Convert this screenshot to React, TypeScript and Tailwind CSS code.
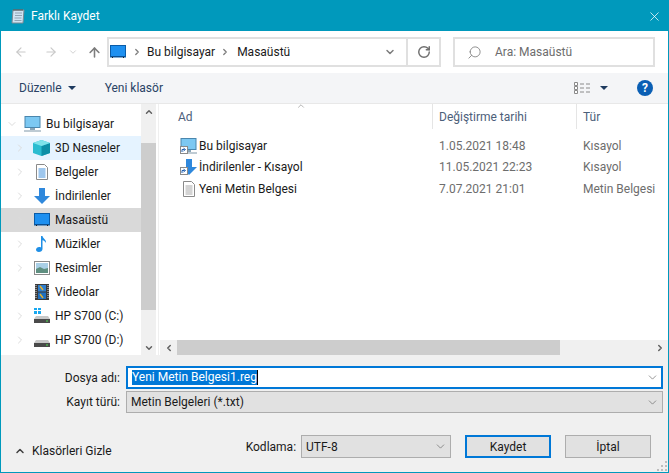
import { ArrowLeft, ArrowRight, ArrowUp, ChevronDown, ChevronRight, ChevronUp, ChevronLeft, RotateCw, Search, X } from "lucide-react";
import type { ReactNode } from "react";

function NotepadIcon() {
  return (
    <svg width="16" height="16" viewBox="0 0 16 16">
      <path d="M3 2h11l-1 13H2z" fill="#cfe3f2" stroke="#7d8a94" />
      <path d="M5 5h7M5 7.500h7M4.500 10h7M4.500 12.500h7" stroke="#8fa3b3" />
      <path d="M4 1v2M6 1v2M8 1v2M10 1v2M12 1v2" stroke="#555" />
    </svg>
  );
}

function ScreenIcon({ w = 16 }: { w?: number }) {
  return (
    <svg width={w} height="14" viewBox="0 0 16 14">
      <rect x="0.500" y="0.500" width="15" height="11.500" fill="#1e90f0" stroke="#0a5ca8" />
      <path d="M1 11h14v1H1z" fill="#0a4f92" />
      <path d="M2 12.500h1M13 12.500h1" stroke="#222" />
    </svg>
  );
}

function PcIcon() {
  return (
    <svg width="17" height="16" viewBox="0 0 17 16">
      <rect x="1" y="0.500" width="15" height="11" fill="#7cc8f2" stroke="#4a86ad" />
      <path d="M6 12h5v2H6z" fill="#8aa6b8" />
      <path d="M0 15h17" stroke="#7f97a8" />
    </svg>
  );
}

function CubeIcon() {
  return (
    <svg width="17" height="16" viewBox="0 0 17 16">
      <path d="M8.500 0L17 3v10l-8.500 3L0 13V3z" fill="#2bbcd0" />
      <path d="M8.500 6L17 3v10l-8.500 3z" fill="#0e8fa6" />
      <path d="M8.500 0L17 3 8.500 6 0 3z" fill="#7fe3ea" />
    </svg>
  );
}

function DocIcon({ lined = false }: { lined?: boolean }) {
  return (
    <svg width="14" height="16" viewBox="0 0 14 16">
      <path d="M1.500 0.500h8l3 3v12h-11z" fill="#fff" stroke="#8a8a8a" />
      <path d="M3.500 5h7M3.500 7h7M3.500 9h7M3.500 11h7M3.500 13h7" stroke={lined ? "#a8a8a8" : "#3f8fdc"} />
    </svg>
  );
}

function DownIcon() {
  return (
    <svg width="16" height="16" viewBox="0 0 16 16">
      <path d="M5 0h6v8h5l-8 8-8-8h5z" fill="#2f88dc" />
    </svg>
  );
}

function MusicIcon() {
  return (
    <svg width="16" height="16" viewBox="0 0 16 16">
      <path d="M7 0h1.500c.5 3 4 3.500 3.500 7-.8-1.500-2-2.500-3.500-2.800V13c0 1.800-1.800 3-3.600 3C3 16 2 15 2 13.800 2 12.300 3.500 11 5.200 11c.7 0 1.300.1 1.800.4z" fill="#1f8fe6" />
    </svg>
  );
}

function PictureIcon() {
  return (
    <svg width="16" height="14" viewBox="0 0 16 14">
      <rect x="0.500" y="0.500" width="15" height="13" fill="#fff" stroke="#8a8a8a" />
      <rect x="2" y="2" width="12" height="10" fill="#a9cfe6" />
      <path d="M2 8l4-2 4 2 4-1v5H2z" fill="#5f8f80" />
    </svg>
  );
}

function VideoIcon() {
  return (
    <svg width="14" height="16" viewBox="0 0 14 16">
      <rect width="14" height="16" fill="#3a3a3a" />
      <rect x="3" y="1" width="8" height="6.500" fill="#2f7fd0" />
      <rect x="3" y="8.500" width="8" height="6.500" fill="#1f6fc0" />
      <path d="M5 2l3 4M5 10l3 4" stroke="#e0b030" strokeWidth="1.500" />
      <path d="M1 1v14M13 1v14" stroke="#ddd" strokeDasharray="1 1" />
    </svg>
  );
}

function DriveIcon({ windows = false }: { windows?: boolean }) {
  return (
    <svg width="16" height="16" viewBox="0 0 16 16">
      {windows && <path d="M0 0h3v2H0zM4 0h3v2H4zM0 3h3v3H0zM4 3h3v3H4z" fill="#18a8f0" />}
      <path d="M2 8h12l2 3H0z" fill="#c8c8c8" />
      <rect y="11" width="16" height="4" fill="#4a4a4a" />
      <rect x="12" y="12.500" width="2" height="1" fill="#4fe04f" />
    </svg>
  );
}

function ShortcutBadge() {
  return (
    <svg width="8" height="8" viewBox="0 0 8 8" className="absolute left-0 bottom-0">
      <rect x="0.500" y="0.500" width="7" height="7" fill="#fff" stroke="#8a8a8a" />
      <path d="M2 6V3.500h2.500M3.500 2.200L5.500 3.500 3.500 5" fill="none" stroke="#1f5fb0" />
    </svg>
  );
}

function DetailsIcon() {
  return (
    <svg width="16" height="12" viewBox="0 0 16 12">
      <path d="M0.500 0.500h3v3h-3zM0.500 4.500h3v3h-3zM0.500 8.500h3v3h-3z" fill="#fff" stroke="#8a8a8a" />
      <path d="M6 2h4M12 2h4M6 6h4M12 6h4M6 10h4M12 10h4" stroke="#8a8a8a" />
    </svg>
  );
}

const tree: { name: string; icon: ReactNode; bg?: string }[] = [
  { name: "3D Nesneler", icon: <CubeIcon />, bg: "bg-[#e5f3ff]" },
  { name: "Belgeler", icon: <DocIcon /> },
  { name: "İndirilenler", icon: <DownIcon /> },
  { name: "Masaüstü", icon: <ScreenIcon />, bg: "bg-[#d9d9d9]" },
  { name: "Müzikler", icon: <MusicIcon /> },
  { name: "Resimler", icon: <PictureIcon /> },
  { name: "Videolar", icon: <VideoIcon /> },
  { name: "HP S700 (C:)", icon: <DriveIcon windows /> },
  { name: "HP S700 (D:)", icon: <DriveIcon /> },
];

const files = [
  { name: "Bu bilgisayar", date: "1.05.2021 18:48", type: "Kısayol", icon: <PcIcon />, link: true },
  { name: "İndirilenler - Kısayol", date: "11.05.2021 22:23", type: "Kısayol", icon: <DownIcon />, link: true },
  { name: "Yeni Metin Belgesi", date: "7.07.2021 21:01", type: "Metin Belgesi", icon: <DocIcon lined />, link: false },
];

export default function App() {
  return (
    <div className="w-[669px] h-[473px] border border-[#0099bc] flex flex-col overflow-hidden bg-[#f0f0f0] text-[12px] text-[#1a1a1a] font-['Roboto','Open_Sans',sans-serif]">
      {/* Başlık */}
      <div className="h-[30px] shrink-0 bg-[#0099bc] flex items-center pl-[9px] pr-[4px] text-white">
        <NotepadIcon />
        <span className="ml-[5px]">Farklı Kaydet</span>
        <X className="ml-auto mr-[2px]" size={15} strokeWidth={1.2} />
      </div>

      {/* Adres satırı */}
      <div className="h-[42px] shrink-0 bg-white flex items-center pl-[13px] text-[#c9c9c9]">
        <ArrowLeft size={14} strokeWidth={2} />
        <ArrowRight className="ml-[16px]" size={14} strokeWidth={2} />
        <ChevronDown className="ml-[10px]" size={10} strokeWidth={2} />
        <ArrowUp className="ml-[9px] text-[#7d7d7d]" size={15} strokeWidth={2.5} />
        <div className="ml-[5px] w-[334px] h-[30px] border-2 border-[#e0e0e0] flex items-center text-[#1a1a1a]">
          <div className="ml-[1px] mr-[6px]"><ScreenIcon /></div>
          <ChevronRight className="text-[#7d7d7d]" size={10} strokeWidth={3} />
          <span className="ml-[5px]">Bu bilgisayar</span>
          <ChevronRight className="ml-[5px] text-[#7d7d7d]" size={10} strokeWidth={3} />
          <span className="ml-[7px]">Masaüstü</span>
          <ChevronDown className="ml-auto mr-[10px] text-[#7d7d7d]" size={12} strokeWidth={3} />
          <div className="w-[33px] h-full border-l-2 border-[#e0e0e0] flex items-center justify-center">
            <RotateCw className="text-[#6f6f6f]" size={14} strokeWidth={2.5} />
          </div>
        </div>
        <div className="ml-[12px] w-[202px] h-[30px] border-2 border-[#e0e0e0] flex items-center text-[#6d6d6d]">
          <Search className="ml-[12px] -scale-x-100 text-[#8a8a8a]" size={15} strokeWidth={1.5} />
          <span className="ml-[13px]">Ara: Masaüstü</span>
        </div>
      </div>

      {/* Araç çubuğu */}
      <div className="h-[30px] shrink-0 bg-[#f4f5f7] flex items-center pl-[18px] text-[#2a4365]">
        <span>Düzenle</span>
        <span className="ml-[6px] w-0 h-0 border-x-[4px] border-x-transparent border-t-[4px] border-t-[#1e3a5f]" />
        <span className="ml-[29px]">Yeni klasör</span>
        <div className="ml-auto"><DetailsIcon /></div>
        <span className="ml-[10px] w-0 h-0 border-x-[4px] border-x-transparent border-t-[4px] border-t-[#1e3a5f]" />
        <span className="ml-[29px] mr-[15px] w-[16px] h-[16px] rounded-full bg-[#0a5fb4] text-white text-[12px] font-bold flex items-center justify-center">?</span>
      </div>

      {/* Ağaç ve dosyalar */}
      <div className="h-[252px] shrink-0 bg-white flex border-t border-[#e8e8e8]">
        <div className="w-[140px] shrink-0 pt-[8px] overflow-hidden">
          <div className="h-[24px] flex items-center">
            <ChevronDown className="ml-[5px] text-[#dcdcdc]" size={12} strokeWidth={2} />
            <div className="ml-[6px]"><PcIcon /></div>
            <span className="ml-[5px]">Bu bilgisayar</span>
          </div>
          {tree.map((item) => (
            <div key={item.name} className={`h-[24px] flex items-center ${item.bg ?? ""}`}>
              <ChevronRight className="ml-[13px] shrink-0 text-[#dcdcdc]" size={12} strokeWidth={2} />
              <div className="ml-[7px] w-[17px] shrink-0 flex justify-center">{item.icon}</div>
              <span className="ml-[5px]">{item.name}</span>
            </div>
          ))}
        </div>

        <div className="w-[15px] shrink-0 bg-[#f0f0f0] flex flex-col text-[#606060]">
          <div className="h-[15px] flex items-center justify-center"><ChevronUp size={10} strokeWidth={3.5} /></div>
          <div className="mt-[24px] h-[167px] bg-[#cdcdcd]" />
          <div className="mt-auto h-[15px] flex items-center justify-center"><ChevronDown size={10} strokeWidth={3.5} /></div>
        </div>

        <div className="ml-[2px] flex-1 flex flex-col border-l border-[#efefef] min-w-0">
          <div className="relative h-[25px] shrink-0 grid grid-cols-[274px_144px_1fr] text-[#4c607a]">
            <ChevronUp className="absolute left-[137px] -top-[3px] text-[#8a8a8a]" size={10} strokeWidth={1.5} />
            <div className="pl-[19px] flex items-center border-r border-[#e5e5e5]">Ad</div>
            <div className="pl-[6px] flex items-center border-r border-[#e5e5e5]">Değiştirme tarihi</div>
            <div className="pl-[6px] flex items-center">Tür</div>
          </div>
          <div className="flex-1 pt-[6px]">
            {files.map((file) => (
              <div key={file.name} className="h-[21.5px] grid grid-cols-[274px_144px_1fr] items-center">
                <div className="pl-[21px] flex items-center">
                  <div className="relative w-[17px] h-[16px] flex justify-center">
                    {file.icon}
                    {file.link && <ShortcutBadge />}
                  </div>
                  <span className="ml-[2px]">{file.name}</span>
                </div>
                <div className="pl-[6px] text-[#6d6d6d]">{file.date}</div>
                <div className="pl-[6px] text-[#6d6d6d] whitespace-nowrap">{file.type}</div>
              </div>
            ))}
          </div>
          <div className="h-[15px] shrink-0 ml-[1px] bg-[#f0f0f0] flex items-center text-[#606060]">
            <div className="w-[17px] flex items-center justify-center"><ChevronLeft size={10} strokeWidth={3.5} /></div>
            <div className="w-[383px] h-full bg-[#cdcdcd]" />
            <div className="ml-auto w-[17px] flex items-center justify-center"><ChevronRight size={10} strokeWidth={3.5} /></div>
          </div>
        </div>
      </div>

      {/* Alt bölüm */}
      <div className="relative flex-1 px-[5px] pt-[11px] min-h-0">
        <div className="flex items-center h-[23px]">
          <span className="w-[114px] text-right">Dosya adı:</span>
          <div className="ml-[6px] w-[537px] h-[23px] bg-white border-2 border-[#0078d7] flex items-center">
            <span className="ml-[4px] bg-[#0078d7] text-white leading-[15px] border-r border-r-black">Yeni Metin Belgesi1.reg</span>
            <ChevronDown className="ml-auto mr-[2px] text-[#606060]" size={13} strokeWidth={1.2} />
          </div>
        </div>
        <div className="flex items-center h-[22px] mt-[2px]">
          <span className="w-[114px] text-right">Kayıt türü:</span>
          <div className="ml-[6px] w-[537px] h-[22px] bg-[#e1e1e1] border border-[#adadad] flex items-center">
            <span className="ml-[4px]">Metin Belgeleri (*.txt)</span>
            <ChevronDown className="ml-auto mr-[3px] text-[#606060]" size={13} strokeWidth={1.2} />
          </div>
        </div>
        <div className="flex items-center mt-[22px] h-[23px]">
          <ChevronUp className="ml-[8px] mt-[8px] text-[#404040]" size={12} strokeWidth={3} />
          <span className="ml-[6px] mt-[8px]">Klasörleri Gizle</span>
          <span className="ml-[134px]">Kodlama:</span>
          <div className="ml-[5px] w-[150px] h-[23px] bg-[#e1e1e1] border border-[#adadad] flex items-center">
            <span className="ml-[4px]">UTF-8</span>
            <ChevronDown className="ml-auto mr-[3px] text-[#606060]" size={13} strokeWidth={1.2} />
          </div>
          <button className="ml-[14px] w-[86px] h-[23px] bg-[#e1e1e1] border-2 border-[#0078d7]">Kaydet</button>
          <button className="ml-[14px] w-[86px] h-[23px] bg-[#e1e1e1] border border-[#adadad]">İptal</button>
        </div>
        <svg width="10" height="10" viewBox="0 0 10 10" className="absolute right-[1px] bottom-[1px]">
          <path d="M8 0h2v2H8zM4 4h2v2H4zM8 4h2v2H8zM0 8h2v2H0zM4 8h2v2H4zM8 8h2v2H8z" fill="#bdbdbd" />
        </svg>
      </div>
    </div>
  );
}
